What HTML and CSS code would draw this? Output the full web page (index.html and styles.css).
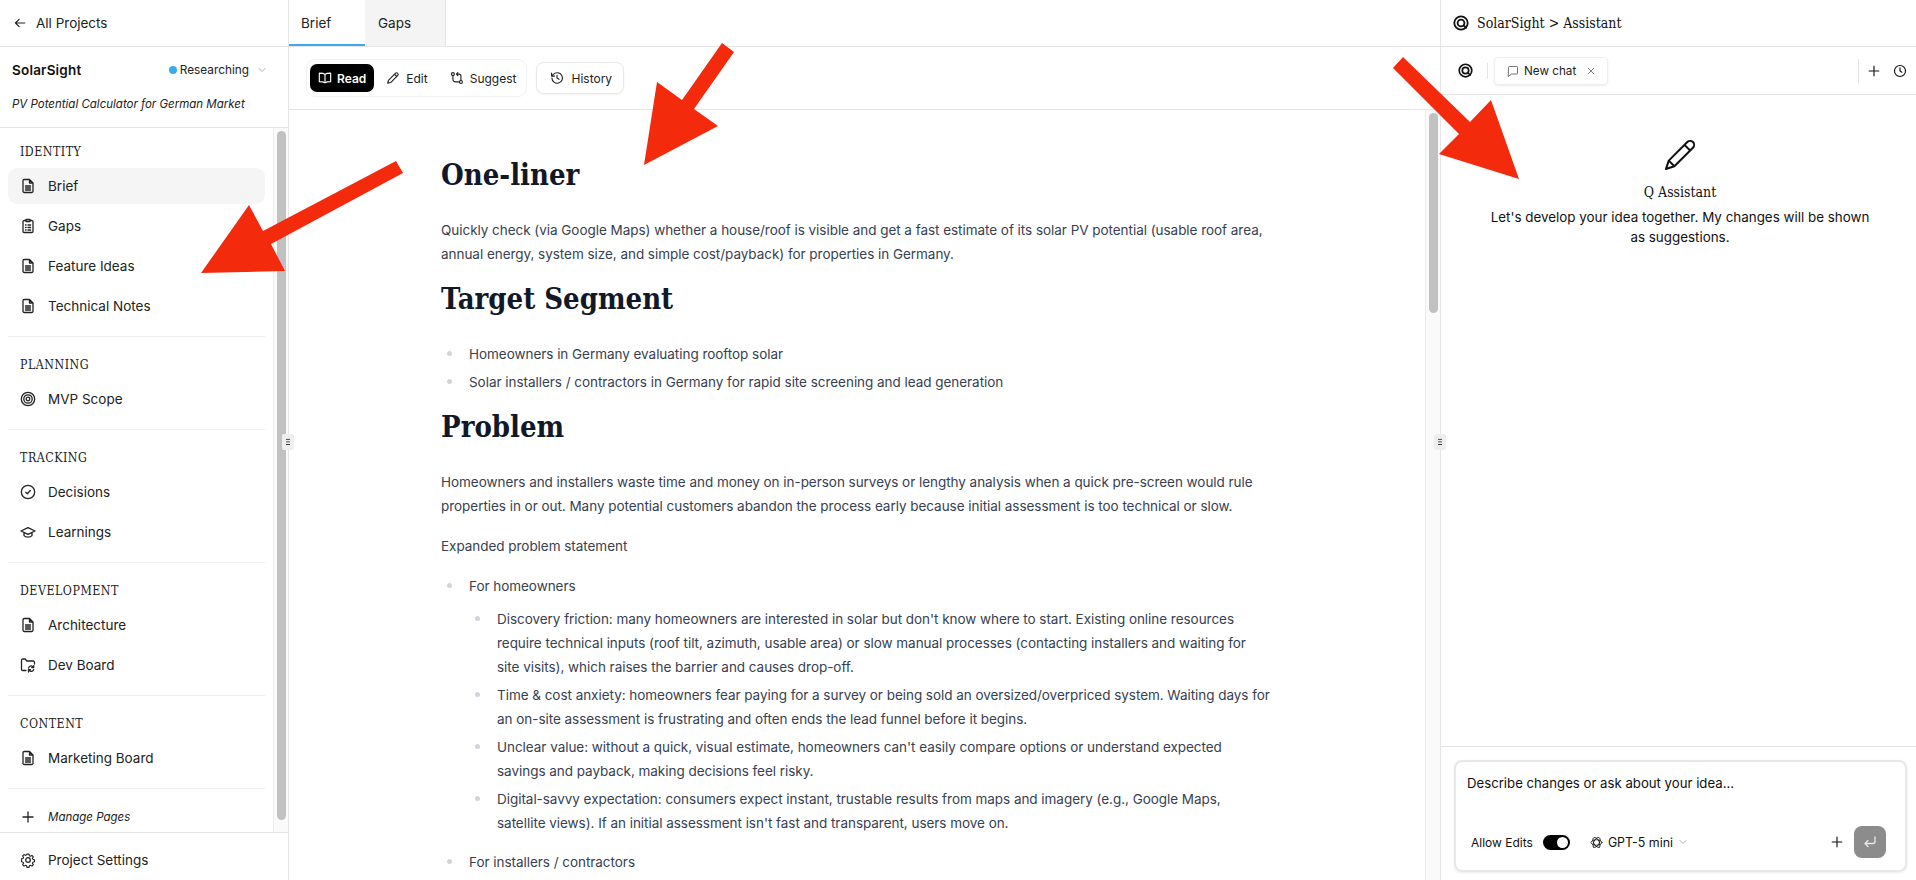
FILE: index.html
```html
<!DOCTYPE html>
<html lang="en">
<head>
    <meta charset="UTF-8">
    <title>SolarSight - Brief</title>
    <link rel="stylesheet" href="styles.css">
</head>
<body>
    <div class="app">
        <aside class="sidebar">
            <div class="back-row">
                <svg class="ico-sm" viewBox="0 0 16 16"><path d="M13.5 8H3M7 3.8 2.8 8 7 12.2"/></svg>
                <span>All Projects</span>
            </div>
            <div class="project">
                <div class="project-top">
                    <b class="project-name">SolarSight</b>
                    <div class="status">
                        <i class="status-dot"></i>
                        <span>Researching</span>
                        <svg class="chev" viewBox="0 0 10 10"><path d="M2 3.5 5 6.5 8 3.5"/></svg>
                    </div>
                </div>
                <em class="project-desc">PV Potential Calculator for German Market</em>
            </div>
            <nav class="nav">
                <div class="nav-scroll">
                    <section class="nav-group">
                        <h4>IDENTITY</h4>
                        <a class="nav-item active"><svg class="ico" viewBox="0 0 16 16"><use href="#doc"/></svg>Brief</a>
                        <a class="nav-item"><svg class="ico" viewBox="0 0 16 16"><path d="M5.5 2.5H4.2A1.2 1.2 0 0 0 3 3.7v9.600a1.200 1.200 0 0 0 1.200 1.200h7.600a1.200 1.200 0 0 0 1.200-1.200V3.700a1.200 1.200 0 0 0-1.200-1.200h-1.300M6 1.500h4v2H6zM5.500 7h.6M5.500 9.500h.6M5.500 12h.6M8 7h2.600M8 9.500h2.600M8 12h2.600"/></svg>Gaps</a>
                        <a class="nav-item"><svg class="ico" viewBox="0 0 16 16"><use href="#doc"/></svg>Feature Ideas</a>
                        <a class="nav-item"><svg class="ico" viewBox="0 0 16 16"><use href="#doc"/></svg>Technical Notes</a>
                    </section>
                    <section class="nav-group">
                        <h4>PLANNING</h4>
                        <a class="nav-item"><svg class="ico" viewBox="0 0 16 16"><circle cx="8" cy="8" r="6.7"/><circle cx="8" cy="8" r="4.2"/><circle cx="8" cy="8" r="1.8"/></svg>MVP Scope</a>
                    </section>
                    <section class="nav-group">
                        <h4>TRACKING</h4>
                        <a class="nav-item"><svg class="ico" viewBox="0 0 16 16"><circle cx="8" cy="8" r="6.7"/><path d="M5.7 8.2 7.3 9.7 10.3 6.5"/></svg>Decisions</a>
                        <a class="nav-item"><svg class="ico" viewBox="0 0 16 16"><path d="M8 3.6 1 7l7 3.4L15 7zM4 8.6v3c1 1.2 2.4 1.6 4 1.6s3-.4 4-1.6v-3"/></svg>Learnings</a>
                    </section>
                    <section class="nav-group">
                        <h4>DEVELOPMENT</h4>
                        <a class="nav-item"><svg class="ico" viewBox="0 0 16 16"><use href="#doc"/></svg>Architecture</a>
                        <a class="nav-item"><svg class="ico" viewBox="0 0 16 16"><path d="M6 13.5H2.8A1.3 1.3 0 0 1 1.5 12.2V3.3A1.3 1.3 0 0 1 2.8 2h2.4l1.6 2h6.4a1.3 1.3 0 0 1 1.3 1.3V7M8.6 11a2.4 2.4 0 0 1 4.2-1.2l.9.8M13.7 8.6v2h-2M13.6 12.6a2.4 2.4 0 0 1-4.2.8l-.9-.8M8.5 15v-2.4h2"/></svg>Dev Board</a>
                    </section>
                    <section class="nav-group">
                        <h4>CONTENT</h4>
                        <a class="nav-item"><svg class="ico" viewBox="0 0 16 16"><use href="#doc"/></svg>Marketing Board</a>
                    </section>
                    <a class="nav-item manage"><svg class="ico" viewBox="0 0 16 16"><path d="M8 3v10M3 8h10"/></svg><em>Manage Pages</em></a>
                </div>
                <div class="nav-track"><div class="thumb"></div></div>
            </nav>
            <a class="nav-item settings"><svg class="ico" viewBox="0 0 16 16"><path d="M6.8 1.5h2.4l.4 1.9 1.3.6 1.7-1 1.6 1.7-1 1.6.5 1.3 1.8.5v2.3l-1.8.5-.5 1.3 1 1.6-1.6 1.7-1.7-1-1.3.6-.4 1.900H6.800l-.4-1.900-1.300-.6-1.700 1-1.600-1.700 1-1.600-.5-1.300-1.800-.5V7.100l1.800-.5.5-1.300-1-1.600 1.600-1.700 1.700 1 1.300-.6z" transform="translate(1.1 .8) scale(.86)"/><circle cx="8" cy="8" r="2.3"/></svg>Project Settings</a>
            <div class="grip"><span></span></div>
        </aside>

        <main class="main">
            <div class="tabs">
                <div class="tab tab-on">Brief</div>
                <div class="tab">Gaps</div>
            </div>
            <div class="toolbar">
                <div class="modes">
                    <div class="mode mode-on"><svg class="ico-sm" viewBox="0 0 16 16"><path d="M8 3.8C6.800 2.800 5 2.500 1.500 2.500v9.700c3.500 0 5.300.3 6.500 1.300 1.200-1 3-1.300 6.500-1.300V2.500C11 2.500 9.200 2.800 8 3.800zM8 3.800v9.700"/></svg>Read</div>
                    <div class="mode"><svg class="ico-sm" viewBox="0 0 16 16"><path d="M2 14l.8-3.300 8.200-8.200a1.500 1.500 0 0 1 2.100 0l.4.400a1.500 1.500 0 0 1 0 2.100l-8.200 8.200zM9.800 3.700l2.500 2.500"/></svg>Edit</div>
                    <div class="mode"><svg class="ico-sm" viewBox="0 0 16 16"><circle cx="3.3" cy="3.5" r="1.7"/><circle cx="12.5" cy="12.5" r="1.7"/><path d="M3.300 5.200v4.300a3 3 0 0 0 3 3h4.500M7.500 3.500h2.700a2.300 2.300 0 0 1 2.300 2.300v5M9 1.800 7.300 3.500 9 5.200"/></svg>Suggest</div>
                </div>
                <div class="history"><svg class="ico-sm" viewBox="0 0 16 16"><path d="M2.200 8a6 6 0 1 0 1.700-4.200L1.800 5.800M1.800 2.500v3.300h3.300M8 4.800V8l2.300 1.500"/></svg>History</div>
            </div>
            <div class="doc">
                <article class="doc-body">
                    <h1>One-liner</h1>
                    <p>Quickly check (via Google Maps) whether a house/roof is visible and get a fast estimate of its solar PV potential (usable roof area, annual energy, system size, and simple cost/payback) for properties in Germany.</p>
                    <h1>Target Segment</h1>
                    <ul>
                        <li>Homeowners in Germany evaluating rooftop solar</li>
                        <li>Solar installers / contractors in Germany for rapid site screening and lead generation</li>
                    </ul>
                    <h1>Problem</h1>
                    <p>Homeowners and installers waste time and money on in-person surveys or lengthy analysis when a quick pre-screen would rule properties in or out. Many potential customers abandon the process early because initial assessment is too technical or slow.</p>
                    <p>Expanded problem statement</p>
                    <ul>
                        <li>For homeowners
                            <ul>
                                <li>Discovery friction: many homeowners are interested in solar but don't know where to start. Existing online resources require technical inputs (roof tilt, azimuth, usable area) or slow manual processes (contacting installers and waiting for site visits), which raises the barrier and causes drop-off.</li>
                                <li>Time &amp; cost anxiety: homeowners fear paying for a survey or being sold an oversized/overpriced system. Waiting days for an on-site assessment is frustrating and often ends the lead funnel before it begins.</li>
                                <li>Unclear value: without a quick, visual estimate, homeowners can't easily compare options or understand expected savings and payback, making decisions feel risky.</li>
                                <li>Digital-savvy expectation: consumers expect instant, trustable results from maps and imagery (e.g., Google Maps, satellite views). If an initial assessment isn't fast and transparent, users move on.</li>
                            </ul>
                        </li>
                        <li>For installers / contractors</li>
                    </ul>
                </article>
                <div class="doc-track"><div class="thumb"></div></div>
            </div>
            <div class="grip"><span></span></div>
        </main>

        <aside class="assistant">
            <div class="as-head">
                <svg class="logo" viewBox="0 0 16 16"><circle cx="8" cy="8" r="6.7"/><circle cx="8" cy="8" r="3.4"/><path d="M10.6 10.400 13 12.800"/></svg>
                <span>SolarSight &gt; Assistant</span>
            </div>
            <div class="as-tabs">
                <svg class="logo logo-tab" viewBox="0 0 16 16"><circle cx="8" cy="8" r="6.7"/><circle cx="8" cy="8" r="3.4"/><path d="M10.6 10.400 13 12.800"/></svg>
                <i class="as-sep"></i>
                <div class="chat-tab">
                    <svg class="ico-chat" viewBox="0 0 16 16"><path d="M2 3a1 1 0 0 1 1-1h10a1 1 0 0 1 1 1v8a1 1 0 0 1-1 1H6l-4 3z"/></svg>
                    <span>New chat</span>
                    <svg class="ico-x" viewBox="0 0 10 10"><path d="M1.5 1.500l7 7M8.500 1.500l-7 7"/></svg>
                </div>
                <i class="as-sep as-sep-end"></i>
                <svg class="ico-sm" viewBox="0 0 16 16"><path d="M8 2.500v11M2.500 8h11"/></svg>
                <svg class="ico-sm clock" viewBox="0 0 16 16"><circle cx="8" cy="8" r="6.3"/><path d="M8 4.500V8l2.200 1.300"/></svg>
            </div>
            <div class="as-empty">
                <svg class="pencil" viewBox="0 0 32 32"><path d="M3.500 28.500 6 21 22.500 4.500a3.500 3.500 0 0 1 5 5L11 26zM20 7l5 5M6 21l5 5"/></svg>
                <h3>Q Assistant</h3>
                <p>Let's develop your idea together. My changes will be shown as suggestions.</p>
            </div>
            <div class="composer-wrap">
                <div class="composer">
                    <div class="composer-text">Describe changes or ask about your idea...</div>
                    <div class="composer-bar">
                        <span class="allow">Allow Edits</span>
                        <i class="toggle"><i></i></i>
                        <div class="model">
                            <svg class="ico-model" viewBox="0 0 16 16"><ellipse cx="8" cy="8" rx="6.8" ry="3.4"/><ellipse cx="8" cy="8" rx="6.8" ry="3.4" transform="rotate(60 8 8)"/><ellipse cx="8" cy="8" rx="6.8" ry="3.4" transform="rotate(120 8 8)"/></svg>
                            <span>GPT-5 mini</span>
                            <svg class="chev" viewBox="0 0 10 10"><path d="M2 3.5 5 6.5 8 3.5"/></svg>
                        </div>
                        <svg class="ico-sm plus" viewBox="0 0 16 16"><path d="M8 2.500v11M2.500 8h11"/></svg>
                        <div class="send"><svg viewBox="0 0 16 16"><path d="M13 3v4.500a2 2 0 0 1-2 2H3M6 6.500 3 9.500l3 3"/></svg></div>
                    </div>
                </div>
            </div>
        </aside>
    </div>

    <svg class="arrows" viewBox="0 0 1916 880">
        <polygon points="396,161 403,173 271,244 285,271 201,273 249,205 263,231"/>
        <polygon points="722,43 734,52 694,109 718,126 644,165 657,82 682,100"/>
        <polygon points="1403,57 1393,68 1459,134 1439,154 1519,179 1491,100 1470,122"/>
    </svg>

    <svg class="defs" width="0" height="0">
        <symbol id="doc" viewBox="0 0 16 16"><path d="M9.5 1.500H4.300A1.300 1.300 0 0 0 3 2.800v10.400a1.300 1.300 0 0 0 1.300 1.300h7.400a1.300 1.300 0 0 0 1.300-1.300V5zM9.500 1.500V5H13M5.500 8h5M5.500 10h5M5.500 12h5"/></symbol>
    </svg>
</body>
</html>
```

FILE: styles.css
```css
* {
    box-sizing: border-box;
}

html, body {
    margin: 0;
    height: 100%;
    overflow: hidden;
}

body {
    font-family: 'Inter', sans-serif;
    font-size: 14px;
    color: #111;
    background: #fff;
}

svg {
    fill: none;
    stroke: currentColor;
    stroke-width: 1.3;
    stroke-linecap: round;
    stroke-linejoin: round;
    flex: none;
}

.app {
    display: flex;
    height: 880px;
}

.ico {
    width: 16px;
    height: 16px;
}

.ico-sm {
    width: 14px;
    height: 14px;
}

.chev {
    width: 10px;
    height: 10px;
    color: #aaa;
    stroke-width: 1;
}

.defs {
    position: absolute;
}

.arrows {
    position: absolute;
    left: 0;
    top: 0;
    width: 1916px;
    height: 880px;
    pointer-events: none;
}

.arrows polygon {
    fill: #f42a0c;
    stroke: none;
}

/* sidebar */
.sidebar {
    position: relative;
    width: 289px;
    display: flex;
    flex-direction: column;
    border-right: 1px solid #e5e5e5;
}

.back-row {
    height: 47px;
    display: flex;
    align-items: center;
    gap: 9px;
    padding: 0 13px;
    font-size: 13.5px;
    color: #222;
    border-bottom: 1px solid #e5e5e5;
}

.project {
    height: 81px;
    padding: 15px 12px 0;
    border-bottom: 1px solid #e5e5e5;
}

.project-top {
    display: flex;
    align-items: center;
    justify-content: space-between;
    padding-right: 9px;
}

.project-name {
    font-size: 13.5px;
    font-weight: 600;
    letter-spacing: .2px;
}

.status {
    display: flex;
    align-items: center;
    gap: 3px;
    font-size: 11.8px;
    color: #222;
}

.status .chev {
    margin-left: 5px;
}

.status-dot {
    width: 8px;
    height: 8px;
    border-radius: 50%;
    background: #3da9e8;
}

.project-desc {
    display: block;
    margin-top: 19px;
    font-size: 11.5px;
    color: #222;
}

.nav {
    flex: 1;
    display: flex;
    min-height: 0;
}

.nav-scroll {
    flex: 1;
    padding: 14px 8px 0;
    min-width: 0;
}

.nav-track {
    width: 15px;
    border-left: 1px solid #ececec;
    background: #fafafa;
    padding: 3px 2px 12px 3px;
}

.thumb {
    height: 100%;
    background: #c1c1c1;
    border-radius: 5px;
}

.nav-group {
    border-bottom: 1px solid #f0f0f0;
    padding-bottom: 8px;
    margin-bottom: 18px;
}

.nav-group h4 {
    margin: 0 0 6px;
    padding-left: 12px;
    font-family: 'DejaVu Serif', serif;
    font-stretch: condensed;
    font-size: 12.3px;
    font-weight: 400;
    letter-spacing: .5px;
    line-height: 20px;
    color: #222;
}

.nav-item {
    display: flex;
    align-items: center;
    gap: 12px;
    height: 36px;
    margin-bottom: 4px;
    padding: 0 12px;
    border-radius: 9px;
    font-size: 13.5px;
    color: #222;
}

.nav-item.active {
    background: #f5f5f5;
}

.manage {
    margin: -4px 0 0;
    height: 28px;
}

.manage em {
    font-size: 11.5px;
}

.settings {
    height: 48px;
    margin: 0;
    border-top: 1px solid #e5e5e5;
    padding: 6px 20px 0;
    border-radius: 0;
}

.grip {
    position: absolute;
    top: 434px;
    right: -6px;
    z-index: 2;
    width: 12px;
    height: 16px;
    background: #eeeeee;
    border-radius: 2px;
    display: flex;
    align-items: center;
    justify-content: center;
}

.grip span {
    width: 4px;
    height: 8px;
    background: radial-gradient(circle, #333 0 .8px, transparent 1px) 0 0 / 2px 2.6px;
}

/* main column */
.main {
    position: relative;
    flex: 1;
    min-width: 0;
    display: flex;
    flex-direction: column;
    border-right: 1px solid #e5e5e5;
}

.tabs {
    height: 47px;
    display: flex;
    border-bottom: 1px solid #e5e5e5;
}

.tab {
    width: 81px;
    padding: 15px 0 0 13px;
    font-size: 13.5px;
    background: #f4f4f4;
    border-right: 1px solid #e5e5e5;
    color: #222;
}

.tab-on {
    width: 76px;
    background: #fff;
    border-right: 0;
    box-shadow: inset 0 -2px 0 #3da9e8;
    padding-left: 12px;
}

.toolbar {
    height: 63px;
    display: flex;
    align-items: center;
    gap: 9px;
    padding: 0 17px;
    border-bottom: 1px solid #e5e5e5;
}

.modes {
    display: flex;
    align-items: center;
    gap: 2px;
    height: 38px;
    padding: 0 0 0 3px;
    border: 1px solid #f2f2f2;
    border-radius: 9px;
    font-size: 12px;
}

.mode {
    display: flex;
    align-items: center;
    gap: 6px;
    height: 28px;
    padding: 0 10px;
    border-radius: 7px;
    color: #222;
}

.mode-on {
    gap: 5px;
    padding: 0 8px;
    background: #000;
    color: #fff;
    font-weight: 600;
}

.history {
    display: flex;
    align-items: center;
    gap: 7px;
    height: 32px;
    padding: 0 11px 0 13px;
    border: 1px solid #e8e8e8;
    border-radius: 8px;
    font-size: 12px;
    color: #222;
    box-shadow: 0 1px 2px rgba(0, 0, 0, .05);
}

.doc {
    flex: 1;
    min-height: 0;
    display: flex;
    overflow: hidden;
}

.doc-body {
    flex: 1;
    min-width: 0;
    padding: 48px 155px 0 152px;
    font-size: 13.5px;
    letter-spacing: -.04px;
    line-height: 24px;
    color: #374151;
}

.doc-body h1 {
    margin: -1px 0 25px;
    font-family: 'DejaVu Serif', serif;
    font-stretch: condensed;
    font-size: 29px;
    line-height: 36px;
    font-weight: 700;
    letter-spacing: 0;
    color: #111827;
}

.doc-body p {
    margin: 0 0 16px;
}

.doc-body ul {
    margin: 0 0 16px;
    padding-left: 28px;
    list-style: none;
}

.doc-body li {
    position: relative;
    margin-bottom: 4px;
}

.doc-body li::before {
    content: "";
    position: absolute;
    left: -22px;
    top: 9px;
    width: 5px;
    height: 5px;
    border-radius: 50%;
    background: #d1d5db;
}

.doc-body ul ul {
    margin: 9px 0 15px;
}

.doc-track {
    width: 15px;
    flex: none;
    padding: 3px 2px 0 3px;
    border-left: 1px solid #ececec;
    background: #fafafa;
}

.doc-track .thumb {
    height: 200px;
}

/* assistant */
.assistant {
    width: 475px;
    display: flex;
    flex-direction: column;
}

.as-head {
    height: 47px;
    display: flex;
    align-items: center;
    gap: 8px;
    padding: 0 12px;
    font-family: 'DejaVu Serif', serif;
    font-stretch: condensed;
    font-size: 14px;
    border-bottom: 1px solid #e5e5e5;
}

.logo {
    width: 16px;
    height: 16px;
    stroke-width: 1.8;
}

.logo-tab {
    width: 15px;
    height: 15px;
}

.as-tabs {
    height: 48px;
    display: flex;
    align-items: center;
    padding: 0 9px 0 17px;
    border-bottom: 1px solid #e5e5e5;
}

.as-sep {
    width: 1px;
    height: 16px;
    background: #e5e5e5;
    margin: 0 6px 0 14px;
}

.as-sep-end {
    margin: 0 8px 0 auto;
    height: 24px;
}

.clock {
    margin-left: 12px;
}

.chat-tab {
    display: flex;
    align-items: center;
    height: 28px;
    padding: 0 12px;
    font-size: 11.7px;
    border: 1px solid #eee;
    border-radius: 4px;
    box-shadow: 0 1px 2px rgba(0, 0, 0, .08);
    color: #222;
}

.ico-chat {
    width: 12px;
    height: 12px;
    margin-right: 5px;
    color: #555;
    stroke-width: 1.1;
}

.ico-x {
    width: 8px;
    height: 8px;
    margin-left: 11px;
    color: #666;
    stroke-width: 1;
}

.as-empty {
    flex: 1;
    display: flex;
    flex-direction: column;
    align-items: center;
    padding: 42px 39px 0 42px;
    text-align: center;
}

.pencil {
    width: 36px;
    height: 36px;
    stroke-width: 1.8;
}

.as-empty h3 {
    margin: 9px 0 5px;
    font-family: 'DejaVu Serif', serif;
    font-stretch: condensed;
    font-size: 14px;
    font-weight: 400;
    line-height: 20px;
}

.as-empty p {
    margin: 0;
    font-size: 13.4px;
    line-height: 20px;
    color: #111;
}

.composer-wrap {
    height: 134px;
    padding: 13px 9px 0 13px;
    border-top: 1px solid #e5e5e5;
}

.composer {
    height: 112px;
    padding: 11px 19px 12px 11px;
    border: 2px solid #e8e8e8;
    border-radius: 8px;
    box-shadow: 0 1px 3px rgba(0, 0, 0, .08);
}

.composer-text {
    font-size: 13.2px;
    line-height: 20px;
}

.composer-bar {
    display: flex;
    align-items: center;
    gap: 10px;
    margin-top: 33px;
    padding-left: 4px;
    font-size: 12px;
}

.toggle {
    width: 27px;
    height: 15px;
    padding: 2px 2px 2px 14px;
    border-radius: 8px;
    background: #000;
}

.toggle i {
    display: block;
    width: 11px;
    height: 11px;
    border-radius: 50%;
    background: #fff;
}

.model {
    display: flex;
    align-items: center;
    gap: 5px;
    margin-left: 10px;
    font-size: 12.4px;
}

.ico-model {
    width: 13px;
    height: 13px;
    stroke-width: 1;
}

.plus {
    margin-left: auto;
}

.send {
    width: 32px;
    height: 32px;
    border-radius: 8px;
    background: #8c8c8c;
    display: flex;
    align-items: center;
    justify-content: center;
    color: #e8e8e8;
}

.send svg {
    width: 16px;
    height: 16px;
}
```
